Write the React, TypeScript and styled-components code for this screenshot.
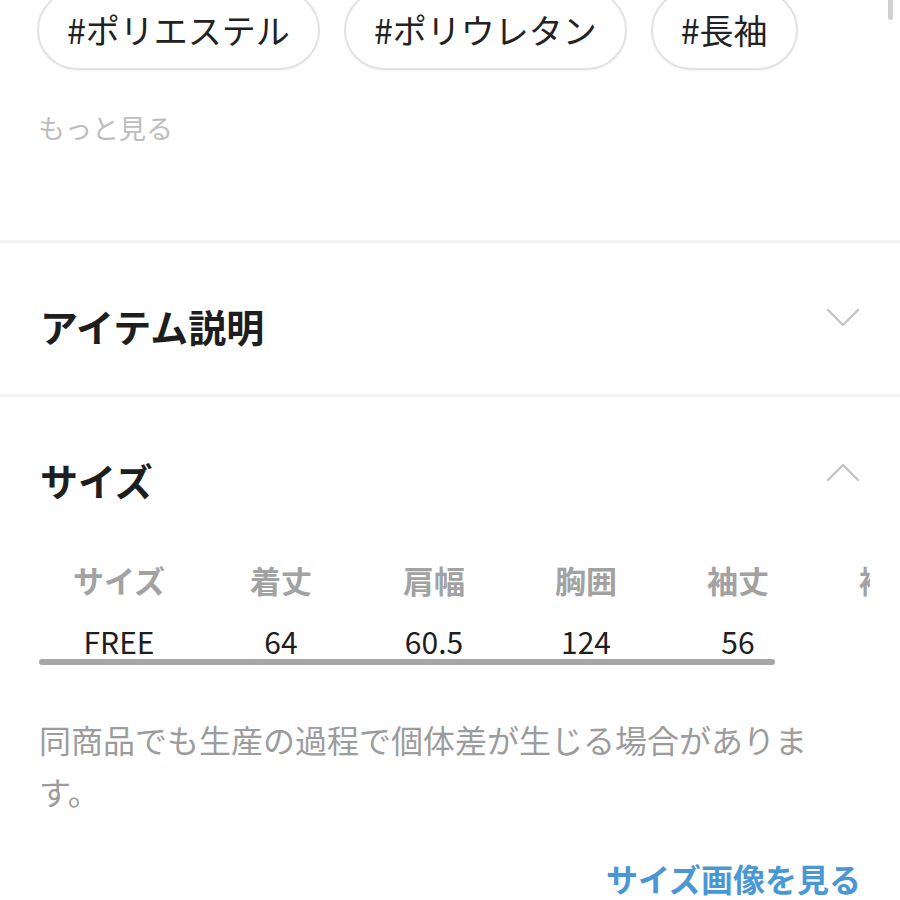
import React from "react";
import styled, { createGlobalStyle } from "styled-components";

const GlobalStyle = createGlobalStyle`
  html, body { margin: 0; padding: 0; background: #fff; }
  body { font-family: "Noto Sans CJK JP", "Noto Sans", sans-serif; color: #222; overflow: hidden; }
`;

const Page = styled.div`
  position: relative;
  width: 900px;
  height: 900px;
  overflow: hidden;
  background: #fff;
`;

const ScrollThumb = styled.div`
  position: absolute;
  top: -6px;
  right: 7px;
  width: 5px;
  height: 26px;
  border-radius: 3px;
  background: #d0d0d0;
`;

const TagRow = styled.div`
  display: flex;
  gap: 24px;
  margin-top: -10px;
  padding-left: 37px;
`;

const Tag = styled.div`
  box-sizing: border-box;
  height: 80px;
  padding: 0 28px;
  display: flex;
  align-items: center;
  border: 2px solid #e2e2e2;
  border-radius: 40px;
  font-size: 34px;
  line-height: 1;
  color: #222;
  box-shadow: 0 1px 2px rgba(0, 0, 0, 0.05);
`;

const More = styled.div`
  margin: 44px 0 0 38px;
  font-size: 27px;
  line-height: 1;
  color: #bdbdbd;
`;

const Divider = styled.div<{ $top: number }>`
  margin-top: ${(p) => p.$top}px;
  height: 3px;
  background: #f3f3f3;
`;

const SectionHead = styled.div<{ $height: number }>`
  box-sizing: border-box;
  height: ${(p) => p.$height}px;
  padding: 64px 40px 0 40px;
  display: flex;
  justify-content: space-between;
  align-items: flex-start;
`;

const SectionTitle = styled.div`
  font-size: 38px;
  font-weight: 700;
  line-height: 1;
  color: #1e1e1e;
`;

const Chevron = styled.svg`
  width: 34px;
  height: 20px;
  margin-top: 1px;
  flex: none;
`;

const TableWrap = styled.div`
  margin: 0 30px 0 38px;
  overflow: hidden;
`;

const TableRow = styled.div<{ $gap: number }>`
  display: flex;
  margin-top: ${(p) => p.$gap}px;
  width: max-content;
`;

const Cell = styled.div<{ $w: number; $head?: boolean }>`
  flex: none;
  width: ${(p) => p.$w}px;
  text-align: center;
  font-size: ${(p) => (p.$head ? 31 : 30)}px;
  font-weight: ${(p) => (p.$head ? 600 : 400)};
  line-height: ${(p) => (p.$head ? 46 : 44)}px;
  color: ${(p) => (p.$head ? "#a2a2a2" : "#1e1e1e")};
  white-space: nowrap;
`;

const HScroll = styled.div`
  margin: -4px 0 0 39px;
  width: 736px;
  height: 6px;
  border-radius: 3px;
  background: #a6a6a6;
`;

const Note = styled.p`
  margin: 48px 70px 0 39px;
  font-size: 32px;
  line-height: 52px;
  color: #9c9c9c;
`;

const LinkRow = styled.div`
  display: flex;
  justify-content: flex-end;
  margin-top: 45px;
  padding-right: 39px;
`;

const SizeLink = styled.a`
  font-size: 32px;
  font-weight: 700;
  line-height: 1;
  color: #4a97d3;
  text-decoration: none;
`;

const ChevronIcon = ({ up }: { up?: boolean }) => (
  <Chevron viewBox="0 0 34 20">
    <polyline
      points={up ? "2,18 17,3 32,18" : "2,2 17,17 32,2"}
      fill="none"
      stroke="#c4c4c4"
      strokeWidth="2.4"
      strokeLinecap="round"
      strokeLinejoin="round"
    />
  </Chevron>
);

const widths = [162, 162, 144, 160, 144, 160];
const heads = ["サイズ", "着丈", "肩幅", "胸囲", "袖丈", "裄丈"];
const values = ["FREE", "64", "60.5", "124", "56", ""];

export default function App() {
  return (
    <Page>
      <GlobalStyle />
      <ScrollThumb />
      <TagRow>
        <Tag>#ポリエステル</Tag>
        <Tag>#ポリウレタン</Tag>
        <Tag>#長袖</Tag>
      </TagRow>
      <More>もっと見る</More>
      <Divider $top={99} />
      <SectionHead $height={151}>
        <SectionTitle>アイテム説明</SectionTitle>
        <ChevronIcon />
      </SectionHead>
      <Divider $top={0} />
      <SectionHead $height={101}>
        <SectionTitle>サイズ</SectionTitle>
        <ChevronIcon up />
      </SectionHead>
      <TableWrap>
        <TableRow $gap={59}>
          {heads.map((h, i) => (
            <Cell key={h} $w={widths[i]} $head>
              {h}
            </Cell>
          ))}
        </TableRow>
        <TableRow $gap={16}>
          {values.map((v, i) => (
            <Cell key={i} $w={widths[i]}>
              {v}
            </Cell>
          ))}
        </TableRow>
      </TableWrap>
      <HScroll />
      <Note>同商品でも生産の過程で個体差が生じる場合があります。</Note>
      <LinkRow>
        <SizeLink href="#">サイズ画像を見る</SizeLink>
      </LinkRow>
    </Page>
  );
}
